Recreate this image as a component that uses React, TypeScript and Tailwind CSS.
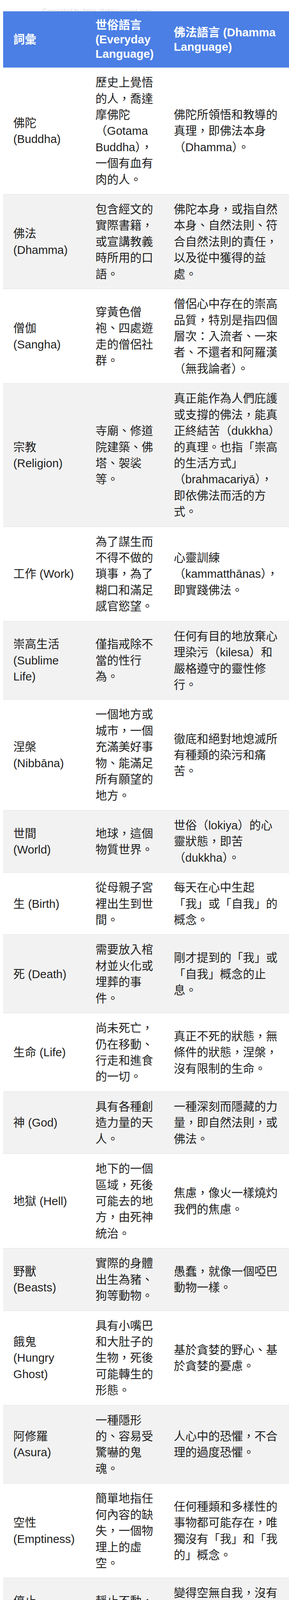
const rows: [string, string, string][] = [
  ["佛陀 (Buddha)", "歷史上覺悟的人，喬達摩佛陀（Gotama Buddha），一個有血有肉的人。", "佛陀所領悟和教導的真理，即佛法本身（Dhamma）。"],
  ["佛法 (Dhamma)", "包含經文的實際書籍，或宣講教義時所用的口語。", "佛陀本身，或指自然本身、自然法則、符合自然法則的責任，以及從中獲得的益處。"],
  ["僧伽 (Sangha)", "穿黃色僧袍、四處遊走的僧侶社群。", "僧侶心中存在的崇高品質，特別是指四個層次：入流者、一來者、不還者和阿羅漢（無我論者）。"],
  ["宗教 (Religion)", "寺廟、修道院建築、佛塔、袈裟等。", "真正能作為人們庇護或支撐的佛法，能真正終結苦（dukkha）的真理。也指「崇高的生活方式」（brahmacariyā），即依佛法而活的方式。"],
  ["工作 (Work)", "為了謀生而不得不做的瑣事，為了糊口和滿足感官慾望。", "心靈訓練（kammatthānas），即實踐佛法。"],
  ["崇高生活 (Sublime Life)", "僅指戒除不當的性行為。", "任何有目的地放棄心理染污（kilesa）和嚴格遵守的靈性修行。"],
  ["涅槃 (Nibbāna)", "一個地方或城市，一個充滿美好事物、能滿足所有願望的地方。", "徹底和絕對地熄滅所有種類的染污和痛苦。"],
  ["世間 (World)", "地球，這個物質世界。", "世俗（lokiya）的心靈狀態，即苦（dukkha）。"],
  ["生 (Birth)", "從母親子宮裡出生到世間。", "每天在心中生起「我」或「自我」的概念。"],
  ["死 (Death)", "需要放入棺材並火化或埋葬的事件。", "剛才提到的「我」或「自我」概念的止息。"],
  ["生命 (Life)", "尚未死亡，仍在移動、行走和進食的一切。", "真正不死的狀態，無條件的狀態，涅槃，沒有限制的生命。"],
  ["神 (God)", "具有各種創造力量的天人。", "一種深刻而隱藏的力量，即自然法則，或佛法。"],
  ["地獄 (Hell)", "地下的一個區域，死後可能去的地方，由死神統治。", "焦慮，像火一樣燒灼我們的焦慮。"],
  ["野獸 (Beasts)", "實際的身體出生為豬、狗等動物。", "愚蠢，就像一個啞巴動物一樣。"],
  ["餓鬼 (Hungry Ghost)", "具有小嘴巴和大肚子的生物，死後可能轉生的形態。", "基於貪婪的野心、基於貪婪的憂慮。"],
  ["阿修羅 (Asura)", "一種隱形的、容易受驚嚇的鬼魂。", "人心中的恐懼，不合理的過度恐懼。"],
  ["空性 (Emptiness)", "簡單地指任何內容的缺失，一個物理上的虛空。", "任何種類和多樣性的事物都可能存在，唯獨沒有「我」和「我的」概念。"],
  ["停止 (Stopping)", "靜止不動，不攪動。", "變得空無自我，沒有任何可以被執取和執著的「自我」。"],
  ["光明 (Light)", "燈光、陽光、電燈等物理光線。", "洞察力、智慧、更高的知識（paññā）。"],
  ["黑暗 (Darkness)", "缺乏光線，導致無法看見。", "缺乏洞察力、對真理的無知、靈性上的盲目（avijjā）。"],
  ["業 (Kamma)", "壞運氣，作為先前犯下罪惡的懲罰。", "行動。壞行動是黑業，好行動是白業。還有第三種非黑非白的業，即對無我（anattā）和空性（suññatā）的領悟，從而消除「自我」。"],
  ["皈依 (Refuge)", "自身以外和不同的某個人或事物，可以依賴其幫助。", "在自身內發現，即我們自己的努力在心中創造出佛、法、僧。"],
  ["佛教核心 (Heart of Buddhism)", "像 VI-SU-PA 這樣的口頭禪或慣用語。", "領悟到絕對不應執著和攀附任何事物。"],
  ["吃 (Eating)", "通過嘴巴攝取營養。", "透過眼、耳、鼻、舌、身、意來攝取感官對象。"],
  ["睡覺 (Sleeping)", "躺下來像狗或貓一樣睡覺。", "無知（avijjā），對事物本質的無知。"],
  ["清醒 (Awake)", "從睡眠中醒來。", "始終保持正念，始終充分覺知。"],
  ["玩 (Play)", "像孩子一樣玩遊戲、運動、歡笑和尋樂。", "於佛法中歡喜，因佛法而快樂。"],
  ["天使 (Angel)", "天宮中特別美麗的女性居民。", "佛法本身（Buddha-Dhamma），因為所有的佛法在開始、中間和結束都是美好的。"],
  ["女與男 (Female \\& Male)", "兩性。", "自然賦予人類的某些職責的區別標誌，需要合作完成的職責。"],
  ["婚姻 (Marriage)", "根據社會習俗結合女人和男人的儀式。", "在佛法中「具有相同的味道、職責或功能」 $amarasa），\n指兩個具有正確願望和需求的人合而為一。"],
  ["父親與母親 (Father \\& Mother)", "生下我們的人。", "我們的父親是無知（avijjā），母親是貪愛（tanhā），它們必須被徹底消滅。"],
  ["朋友 (Friend)", "夥伴，做取悅自己之事的人。", "佛法，特別是能讓我們從苦中解脫的那一方面，即八正道。"],
  ["敵人 (Enemy)", "我們憎恨並試圖傷害我們的人。", "我們自己錯誤引導的心和對它的誤用。"],
  ["腐臭物 (Putridness)", "爛魚或類似的東西。", "心理染污（kilesa），如過度的慾望、自我中心、和對「我」與「我的」概念的痴迷。"],
  ["笑聲 (Laughter)", "開懷大笑，像嬰兒在搖籃裡的行為。", "聖者對所有因緣和合、無常、苦、無我的事物發出的笑聲。"],
  ["歌唱 (Singing)", "像在收音機裡聽到的，與哭泣同類。", "聖者因見到佛法而發出的歡樂之歌，宣揚佛法。"],
  ["跳舞 (Dancing)", "像瘋子的滑稽動作。", "聖者對染污的嘲笑，宣告他們的解脫。"],
];

export default function App() {
  const last = rows.length - 1;
  return (
    <div className="w-[740px] overflow-hidden bg-white font-['Liberation_Sans','Noto_Sans_CJK_TC',sans-serif]">
      <div className="h-[28.7px] overflow-hidden pl-[108px] pt-[20px] text-[16.5px] leading-none text-[#d6d6d6]">
        Generated by https://tableconvert.com
      </div>
      <table className="ml-[8px] w-[740px] table-fixed border-collapse text-left text-[29.5px]">
        <colgroup>
          <col className="w-[210.5px]" />
          <col className="w-[200.5px]" />
          <col className="w-[329px]" />
        </colgroup>
        <thead>
          <tr className="bg-[#4b7fe5] text-white">
            <th className="py-[16.4px] pl-[26px] pr-[24px] align-middle font-bold leading-[37.2px]">詞彙</th>
            <th className="py-[16.4px] pl-[26px] pr-[22px] align-middle font-bold leading-[37.2px]">
              世俗語言 (Everyday Language)
            </th>
            <th className="py-[16.4px] pl-[26px] pr-[28px] align-middle font-bold leading-[37.2px]">
              佛法語言 (Dhamma Language)
            </th>
          </tr>
        </thead>
        <tbody className="text-[#1e1e1e]">
          {rows.map((r, i) => {
            const bg = i % 2 === 0 ? "bg-white" : "bg-[#f2f2f2]";
            const line = i === last ? "border-b-2 border-[#4b7fe5]" : "border-b border-[#e2e2e2]";
            return (
              <tr key={i} className={bg}>
                <td className={`py-[17px] pl-[26px] pr-[24px] align-middle leading-[41.42px] ${line}`}>{r[0]}</td>
                <td className={`py-[17px] pl-[26px] pr-[22px] align-middle leading-[41.42px] ${line}`}>{r[1]}</td>
                <td className={`whitespace-pre-line py-[17px] pl-[26px] pr-[28px] align-middle leading-[41.42px] ${line}`}>
                  {r[2]}
                </td>
              </tr>
            );
          })}
        </tbody>
      </table>
    </div>
  );
}
